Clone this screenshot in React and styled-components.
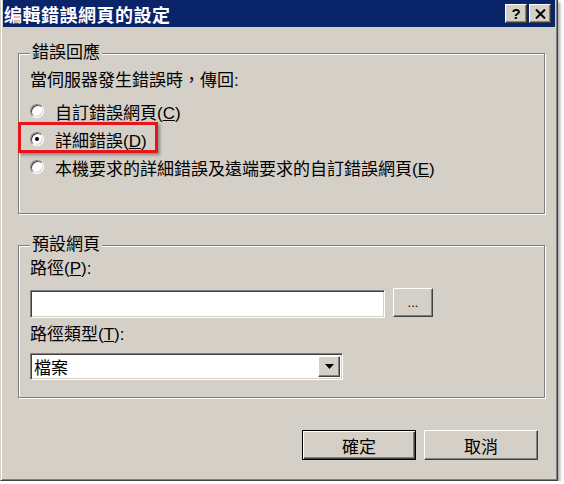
import React from 'react';
import styled, { createGlobalStyle } from 'styled-components';

const GlobalStyle = createGlobalStyle`
  html, body {
    margin: 0;
    padding: 0;
    background: #ffffff;
  }
  body {
    font-family: "Liberation Sans", "Noto Sans CJK TC", sans-serif;
    font-size: 17px;
    color: #000;
  }
`

const FACE = '#d4d0c8';

const Window = styled.div`
  box-sizing: border-box;
  width: 558px;
  height: 481px;
  background: ${FACE};
  border: 1px solid;
  border-top: none;
  border-color: ${FACE} #404040 #404040 ${FACE};
  box-shadow: inset 1px 0 0 #fff, inset -1px -1px 0 #808080, 2px 2px 3px rgba(0,0,0,0.35);
  padding: 0 2px 2px 2px;
  display: flex;
  flex-direction: column;
`

const TitleBar = styled.div`
  height: 27px;
  background: #0a246a;
  display: flex;
  align-items: center;
  padding: 0 4px 0 1px;
`

const TitleText = styled.div`
  flex: 1;
  color: #fff;
  font-weight: bold;
  font-size: 18px;
  letter-spacing: 0.5px;
  font-family: "Noto Sans CJK TC", sans-serif;
`

const TitleButtons = styled.div`
  display: flex;
  gap: 2px;
`

const CaptionButton = styled.div`
  box-sizing: border-box;
  width: 22px;
  height: 19px;
  background: ${FACE};
  border: 1px solid;
  border-color: #fff #404040 #404040 #fff;
  box-shadow: inset -1px -1px 0 #808080;
  display: flex;
  align-items: center;
  justify-content: center;
  font-family: "Liberation Sans", sans-serif;
  font-weight: bold;
  font-size: 15px;
  line-height: 1;
`

const Content = styled.div`
  flex: 1;
  padding: 26px 10px 0 15px;
  display: flex;
  flex-direction: column;
`

const Group = styled.div`
  box-sizing: border-box;
  height: ${p => p.$h}px;
  margin-top: ${p => p.$mt || 0}px;
  border: 1px solid #808080;
  box-shadow: 1px 1px 0 #fff, inset 1px 1px 0 #fff;
  padding: 0 0 0 11px;
  display: flex;
  flex-direction: column;
`

const GroupTitle = styled.div`
  align-self: flex-start;
  margin-top: -10px;
  padding: 0 2px;
  background: ${FACE};
  line-height: 17px;
`

const Line = styled.div`
  line-height: 20px;
  margin-top: ${p => p.$mt || 0}px;
`

const RadioList = styled.div`
  margin-top: 6px;
  display: flex;
  flex-direction: column;
`

const RadioRow = styled.div`
  position: relative;
  height: 28px;
  display: flex;
  align-items: center;
  gap: 11px;
`

const RadioCircle = styled.span`
  box-sizing: border-box;
  width: 14px;
  height: 14px;
  border-radius: 50%;
  background: #fff;
  border: 1px solid;
  border-color: #808080 #fff #fff #808080;
  box-shadow: inset 1px 1px 0 #404040, inset -1px -1px 0 ${FACE};
  display: flex;
  align-items: center;
  justify-content: center;
  &::after {
    content: '';
    display: ${p => (p.$checked ? 'block' : 'none')};
    width: 4px;
    height: 4px;
    border-radius: 50%;
    background: #000;
  }
`

const Highlight = styled.div`
  position: absolute;
  left: -12px;
  top: -3px;
  width: 140px;
  height: 31px;
  box-sizing: border-box;
  border: 3px solid #e8141b;
  box-shadow: 2px 2px 3px rgba(0,0,0,0.35);
  pointer-events: none;
`

const FieldRow = styled.div`
  margin-top: 11px;
  display: flex;
  align-items: flex-start;
  gap: 8px;
`

const Sunken = styled.div`
  box-sizing: border-box;
  width: ${p => p.$w}px;
  height: ${p => p.$h}px;
  background: #fff;
  border: 1px solid;
  border-color: #808080 #fff #fff #808080;
  box-shadow: inset 1px 1px 0 #404040, inset -1px -1px 0 ${FACE};
  display: flex;
  align-items: center;
  padding: 2px 2px 2px 3px;
  margin-top: ${p => p.$mt || 0}px;
`

const SelectText = styled.span`
  flex: 1;
`

const RaisedButton = styled.div`
  box-sizing: border-box;
  width: ${p => p.$w}px;
  height: ${p => p.$h}px;
  margin-top: ${p => p.$mt || 0}px;
  background: ${FACE};
  border: 1px solid;
  border-color: #fff #404040 #404040 #fff;
  box-shadow: inset -1px -1px 0 #808080;
  display: flex;
  align-items: center;
  justify-content: center;
  font-size: ${p => p.$fs || 17}px;
`

const DropButton = styled(RaisedButton)`
  height: 100%;
`

const Footer = styled.div`
  margin-top: 32px;
  margin-right: 7px;
  display: flex;
  justify-content: flex-end;
  gap: 8px;
`

const DialogButton = styled.div`
  box-sizing: border-box;
  width: 114px;
  height: 30px;
  background: ${FACE};
  display: flex;
  align-items: center;
  justify-content: center;
  border: 1px solid ${p => (p.$default ? '#000' : '#fff')};
  border-color: ${p => (p.$default ? '#000' : '#fff #404040 #404040 #fff')};
  box-shadow: ${p => (p.$default
    ? 'inset 1px 1px 0 #fff, inset -1px -1px 0 #404040, inset -2px -2px 0 #808080'
    : 'inset -1px -1px 0 #808080')};
`

const Radio = ({ checked, children, highlight }) => (
  <RadioRow>
    <RadioCircle $checked={checked} />
    <span>{children}</span>
    {highlight && <Highlight />}
  </RadioRow>
)

const App = () => {
  return (
    <>
      <GlobalStyle />
      <Window>
        <TitleBar>
          <TitleText>编輯錯誤網頁的設定</TitleText>
          <TitleButtons>
            <CaptionButton>?</CaptionButton>
            <CaptionButton>
              <svg width="11" height="10" viewBox="0 0 11 10">
                <path d="M1 0.5 L10 9.5 M10 0.5 L1 9.5" stroke="#000" strokeWidth="2" />
              </svg>
            </CaptionButton>
          </TitleButtons>
        </TitleBar>

        <Content>
          <Group $h={161}>
            <GroupTitle>錯誤回應</GroupTitle>
            <Line $mt={10}>當伺服器發生錯誤時，傳回:</Line>
            <RadioList>
              <Radio>自訂錯誤網頁(<u>C</u>)</Radio>
              <Radio checked highlight>詳細錯誤(<u>D</u>)</Radio>
              <Radio>本機要求的詳細錯誤及遠端要求的自訂錯誤網頁(<u>E</u>)</Radio>
            </RadioList>
          </Group>

          <Group $h={153} $mt={31}>
            <GroupTitle>預設網頁</GroupTitle>
            <Line $mt={6}>路徑(<u>P</u>):</Line>
            <FieldRow>
              <Sunken $w={355} $h={28} />
              <RaisedButton $w={40} $h={29} $mt={-2} $fs={13}>...</RaisedButton>
            </FieldRow>
            <Line $mt={7}>路徑類型(<u>T</u>):</Line>
            <Sunken $w={313} $h={27} $mt={8}>
              <SelectText>檔案</SelectText>
              <DropButton $w={22}>
                <svg width="9" height="5" viewBox="0 0 9 5">
                  <path d="M0 0 H9 L4.5 5 Z" fill="#000" />
                </svg>
              </DropButton>
            </Sunken>
          </Group>

          <Footer>
            <DialogButton $default>確定</DialogButton>
            <DialogButton>取消</DialogButton>
          </Footer>
        </Content>
      </Window>
    </>
  );
}

export default App;
